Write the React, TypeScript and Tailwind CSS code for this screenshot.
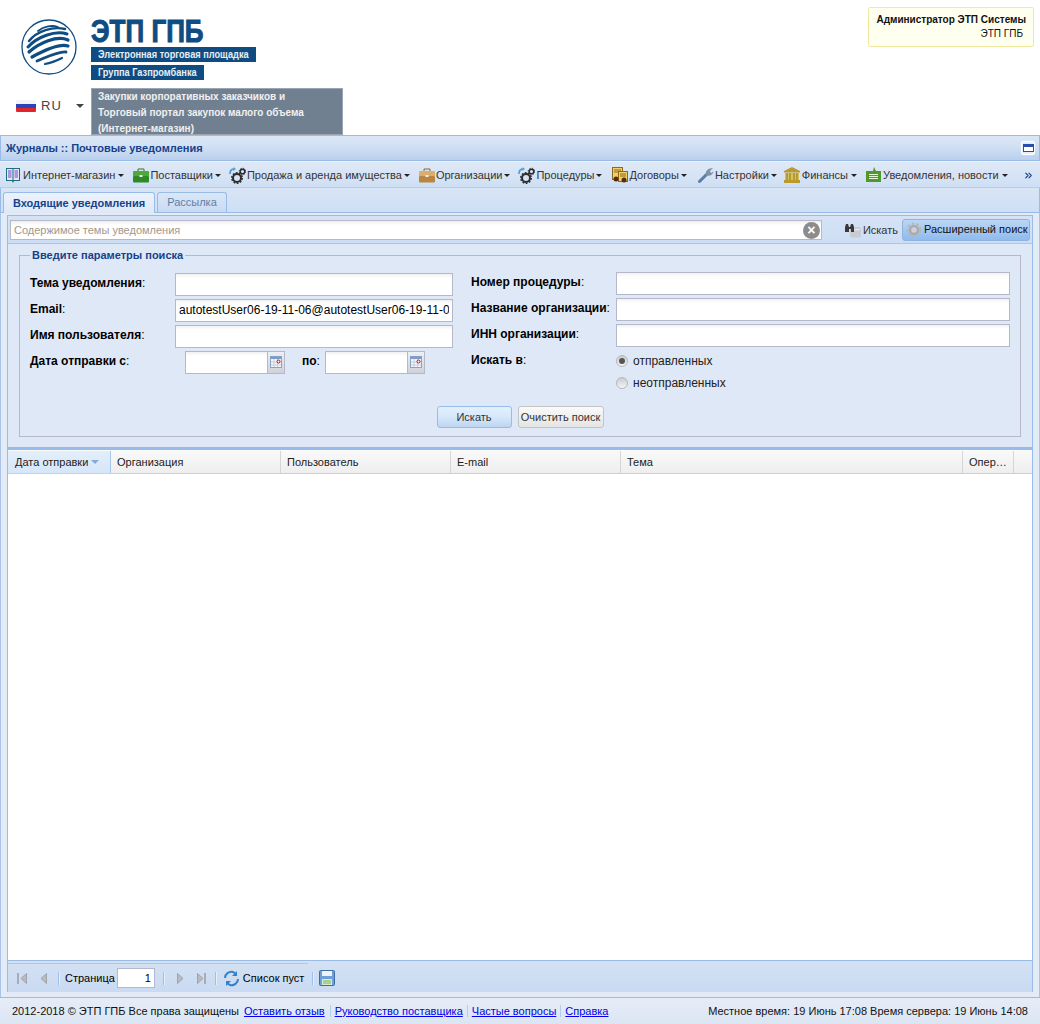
import React from 'react';
import { ChevronsRight } from 'lucide-react';

const Caret = () => (
  <span className="ml-[1px] inline-block h-0 w-0 border-x-[3px] border-t-[3px] border-x-transparent border-t-[#222]" />
);

const Gears = () => (
  <svg width="17" height="17" viewBox="0 0 17 17" fill="none">
    <path d="M1 7 C1 3.500 2.500 2 5 2" stroke="#5aa0d8" strokeWidth="1.800" />
    <path d="M4.500 0 L7 2 L4.500 4 Z" fill="#5aa0d8" />
    <circle cx="8" cy="11" r="4" stroke="#2b2b2b" strokeWidth="2" />
    <circle cx="8" cy="11" r="5.300" stroke="#2b2b2b" strokeWidth="1.400" strokeDasharray="1.800 1.500" />
    <circle cx="13.500" cy="4.500" r="2.300" stroke="#2b2b2b" strokeWidth="1.500" />
    <circle cx="13.500" cy="4.500" r="3.300" stroke="#2b2b2b" strokeWidth="1" strokeDasharray="1.300 1.300" />
  </svg>
);

const BookIcon = () => (
  <svg width="16" height="17" viewBox="0 0 16 17">
    <path d="M1 1h14v13H9l-1 2-1-2H1z" fill="#1d6f7a" />
    <rect x="2" y="2" width="5.500" height="11" fill="#e8e4fa" />
    <rect x="8.500" y="2" width="5.500" height="11" fill="#e8e4fa" />
    <path d="M3 4h3.500M3 6h3.500M3 8h3.500M3 10h3.500M9.500 4H13M9.500 6H13M9.500 8H13M9.500 10H13" stroke="#6a4bc8" />
  </svg>
);

const Case = ({ top, bottom, line }: { top: string; bottom: string; line: string }) => (
  <svg width="16" height="15" viewBox="0 0 16 15">
    <path d="M5 3V1h6v2" fill="none" stroke={line} />
    <rect y="3" width="16" height="5.500" rx="1" fill={top} />
    <rect y="8" width="16" height="6.500" rx="1" fill={bottom} />
    <rect x="6.500" y="7" width="3" height="2" fill="#eee" />
  </svg>
);

const Contracts = () => (
  <svg width="16" height="16" viewBox="0 0 16 16">
    <rect x="0.500" y="0.500" width="10" height="12" fill="#f2cf6a" stroke="#8a6a18" />
    <rect x="6.500" y="4.500" width="9" height="10" fill="#f2cf6a" stroke="#8a6a18" />
    <path d="M2 3h7M2 5h4M8 7h6M8 9h6" stroke="#8a6a18" />
    <circle cx="4" cy="12" r="2.500" fill="#5a2a12" />
    <circle cx="12" cy="13" r="2.500" fill="#5a2a12" />
  </svg>
);

const Wrench = () => (
  <svg width="16" height="16" viewBox="0 0 16 16">
    <path d="M1.500 14.500 L9 7" stroke="#5b7fa6" strokeWidth="3" strokeLinecap="round" />
    <path d="M8 8 C7 4 10 1 15 1 L12 4 L13 6 L15.500 4.500 C15 8 11 10 8 8Z" fill="#7d93aa" />
  </svg>
);

const Bank = () => (
  <svg width="16" height="16" viewBox="0 0 16 16">
    <path d="M8 0 L16 4 V5.500 H0 V4Z" fill="#b99a2a" />
    <rect x="1" y="6" width="14" height="7" fill="#dcc255" />
    <path d="M3 6v7M6 6v7M10 6v7M13 6v7" stroke="#8d7420" />
    <rect y="13" width="16" height="3" fill="#b99a2a" />
  </svg>
);

const NoteIcon = () => (
  <svg width="15" height="16" viewBox="0 0 15 16">
    <path d="M0 4 L7 4 L8 0 L10 4 H15 V15 H0Z" fill="#4f9a2c" />
    <path d="M3 7.500h9M3 9.500h9M3 11.500h9" stroke="#e8f5d8" />
  </svg>
);

const menuItems: { icon: React.ReactNode; label: string; gap: string; mr: string }[] = [
  { icon: <BookIcon />, label: 'Интернет-магазин', gap: 'gap-[2px]', mr: 'mr-[9px]' },
  { icon: <Case top="#4ea83a" bottom="#2f8a24" line="#2f7a22" />, label: 'Поставщики', gap: 'gap-[1px]', mr: 'mr-[8px]' },
  { icon: <Gears />, label: 'Продажа и аренда имущества', gap: 'gap-[1px]', mr: 'mr-[9px]' },
  { icon: <Case top="#dcae6a" bottom="#b9853f" line="#8b6430" />, label: 'Организации', gap: 'gap-[1px]', mr: 'mr-[8px]' },
  { icon: <Gears />, label: 'Процедуры', gap: 'gap-[1px]', mr: 'mr-[10px]' },
  { icon: <Contracts />, label: 'Договоры', gap: 'gap-[1px]', mr: 'mr-[11px]' },
  { icon: <Wrench />, label: 'Настройки', gap: 'gap-[1px]', mr: 'mr-[7px]' },
  { icon: <Bank />, label: 'Финансы', gap: 'gap-[2px]', mr: 'mr-[9px]' },
  { icon: <NoteIcon />, label: 'Уведомления, новости', gap: 'gap-[2px]', mr: 'mr-0' },
];

const Logo = () => (
  <svg width="60" height="58" viewBox="0 0 60 58" fill="none">
    <circle cx="30" cy="29" r="27" stroke="#0f4c81" strokeWidth="1.300" />
    <g stroke="#0f4c81" strokeLinecap="round" transform="translate(0 -1)">
      <path d="M10 24 C18 14 34 9 46 12" strokeWidth="2.400" />
      <path d="M9 30 C18 20 36 13 48 17" strokeWidth="3" />
      <path d="M10 35 C20 26 38 18 49 23" strokeWidth="3.200" />
      <path d="M13 40 C24 34 40 26 49 29" strokeWidth="3.200" />
      <path d="M18 44 C28 40 40 34 47 35" strokeWidth="2.800" />
      <path d="M26 47 C32 46 39 43 43 41" strokeWidth="2.200" />
      <path d="M19 14 C25 9 33 8 39 10" strokeWidth="1.800" />
    </g>
  </svg>
);

const Field = ({ width, value = '' }: { width: string; value?: string }) => (
  <input
    readOnly
    value={value}
    className={`${width} h-[23px] border border-[#b5b8c8] bg-white bg-gradient-to-b from-[#f1f1f1] to-white to-[4px] px-[3px] text-[12px] text-black outline-none`}
  />
);

const DateField = () => (
  <div className="flex h-[23px] w-[100px] border border-[#b5b8c8] bg-white">
    <div className="flex-1 bg-gradient-to-b from-[#f1f1f1] to-white to-[4px]" />
    <div className="flex w-[17px] items-center justify-center border-l border-[#b5b8c8] bg-gradient-to-b from-[#eceff4] to-[#cfd2d8]">
      <svg width="12" height="12" viewBox="0 0 12 12">
        <rect x="0.500" y="0.500" width="11" height="11" fill="#f4f6fa" stroke="#8ea3c4" />
        <rect x="0.500" y="0.500" width="11" height="2.500" fill="#7e9cc9" />
        <path d="M4 3v8M7.500 3v8M1 6h10M1 9h10" stroke="#c5cfde" />
        <circle cx="8.500" cy="5.500" r="1.500" fill="#fff" stroke="#a0141e" />
      </svg>
    </div>
  </div>
);

const Label = ({ text, width }: { text: string; width: string }) => (
  <div className={`${width} shrink-0 pb-[2px] text-[12px] text-black`}>
    <span className="font-bold">{text}</span>:
  </div>
);

const Radio = ({ checked, label }: { checked?: boolean; label: string }) => (
  <div className="flex h-[22px] items-center gap-[5px] text-[12px] text-[#222]">
    <span className="flex h-[12px] w-[12px] items-center justify-center rounded-full border border-[#b4b8bf] bg-gradient-to-b from-[#c9ccd1] to-[#f5f5f5]">
      {checked && <span className="h-[6px] w-[6px] rounded-full bg-[#555]" />}
    </span>
    {label}
  </div>
);

const Sep = ({ className }: { className: string }) => (
  <span className={`${className} h-[13px] w-px bg-[#9cc0ee] shadow-[1px_0_0_#e6eef9]`} />
);

const NavIcon = ({ dir, end, className = '' }: { dir: 'l' | 'r'; end?: boolean; className?: string }) => (
  <svg width="12" height="13" viewBox="0 0 12 13" className={className}>
    {dir === 'l' ? (
      <>
        {end && <rect x="1" y="1" width="2" height="11" fill="#a9adb3" />}
        <path d={end ? 'M10.500 1.500v10L5 6.500z' : 'M8.500 1.500v10L3 6.500z'} fill="#b8bcc1" stroke="#a0a4aa" />
      </>
    ) : (
      <>
        <path d="M2.500 1.500v10L8 6.500z" fill="#b8bcc1" stroke="#a0a4aa" />
        {end && <rect x="9" y="1" width="2" height="11" fill="#a9adb3" />}
      </>
    )}
  </svg>
);

const columns = [
  { title: 'Организация', w: 'w-[170px]' },
  { title: 'Пользователь', w: 'w-[170px]' },
  { title: 'E-mail', w: 'w-[170px]' },
  { title: 'Тема', w: 'w-[342px]' },
  { title: 'Опер…', w: 'w-[51px]' },
];

export default function App() {
  return (
    <div className="flex h-[1024px] w-[1040px] flex-col overflow-hidden bg-white font-['Liberation_Sans',Arial,sans-serif] text-[11px]">
      {/* шапка */}
      <div className="flex h-[135px] shrink-0 justify-between">
        <div className="pt-[18px]">
          <div className="flex">
            <div className="ml-[19px] mr-[13px] h-[62px] w-[59px]">
              <Logo />
            </div>
            <div className="flex flex-col items-start">
              <div className="h-[27px] origin-left scale-x-[0.84] text-[31px] leading-[27px] font-bold whitespace-nowrap text-[#0f4c81] [-webkit-text-stroke:1px_#0f4c81]">
                ЭТП ГПБ
              </div>
              <div className="mt-[2px] flex h-[15px] w-[165px] items-center bg-[#0f4c81] pl-[7px] text-[10px] font-bold whitespace-nowrap text-[#e8eef5]">
                <span className="inline-block origin-left scale-x-[0.92]">Электронная торговая площадка</span>
              </div>
              <div className="mt-[3px] flex h-[15px] w-[113px] items-center bg-[#0f4c81] pl-[7px] text-[10px] font-bold whitespace-nowrap text-[#e8eef5]">
                <span className="inline-block origin-left scale-x-[0.92]">Группа Газпромбанка</span>
              </div>
            </div>
          </div>
          <div className="mt-[8px] flex items-start">
            <div className="mt-[8px] ml-[16px] flex w-[75px] items-center">
              <div className="h-[12px] w-[20px] overflow-hidden rounded-[1px]">
                <div className="h-[4px] bg-[#f4f4f4]" />
                <div className="h-[4px] bg-[#2a45b8]" />
                <div className="h-[4px] bg-[#e0262c]" />
              </div>
              <span className="ml-[5px] text-[13px] tracking-[1px] text-[#444]">RU</span>
              <span className="ml-[14px] h-0 w-0 border-x-[4px] border-t-[4px] border-x-transparent border-t-[#444]" />
            </div>
            <div className="h-[47px] w-[252px] overflow-hidden border border-[#9aa5b1] bg-[#708090] pl-[6px] text-[10px] leading-[16px] font-bold text-[#f0f0f0]">
              <div>Закупки корпоративных заказчиков и</div>
              <div>Торговый портал закупок малого объема</div>
              <div>(Интернет-магазин)</div>
            </div>
          </div>
        </div>
        <div className="mt-[7px] mr-[6px] flex h-[40px] w-[166px] flex-col rounded-[2px] border border-[#f0e9a0] bg-[#fffff0] pt-[5px] pr-[7px] text-right text-[10px] leading-[14px] text-[#111]">
          <div className="font-bold">Администратор ЭТП Системы</div>
          <div className="pr-[3px]">ЭТП ГПБ</div>
        </div>
      </div>

      {/* заголовок панели */}
      <div className="flex h-[26px] shrink-0 items-center justify-between border border-[#99bbe8] bg-gradient-to-b from-[#dbe7f6] via-[#cfdff3] via-50% to-[#b9cfee] pr-[4px] pl-[5px] font-bold text-[#15428b]">
        <span>Журналы :: Почтовые уведомления</span>
        <span className="flex h-[14px] w-[14px] items-center justify-center rounded-[2px] border border-white bg-[#e6eef9]">
          <span className="h-[8px] w-[11px] border border-t-[3px] border-[#2a4fa8] bg-white" />
        </span>
      </div>

      {/* меню */}
      <div className="flex h-[27px] shrink-0 items-center border-y border-t-[#eef4fb] border-b-[#b5cdec] bg-gradient-to-b from-[#dfe9f7] to-[#cfdff4] pt-[1px] pl-[5px] text-[#333]">
        {menuItems.map((m, i) => (
          <div key={i} className={`flex items-center ${m.gap} ${m.mr} whitespace-nowrap`}>
            {m.icon}
            <span>{m.label}</span>
            <Caret />
          </div>
        ))}
        <ChevronsRight size={11} strokeWidth={2.500} className="mr-[6px] ml-auto text-[#15428b]" />
      </div>

      {/* вкладки */}
      <div className="flex h-[25px] shrink-0 items-end gap-[2px] border-x border-b border-[#99bbe8] bg-gradient-to-b from-[#d9e5f5] to-[#cedff5] pl-[2px]">
        <div className="-mb-px flex h-[21px] w-[152px] items-center justify-center rounded-t-[3px] border border-b-0 border-[#99bbe8] bg-gradient-to-b from-[#e9f2fd] to-[#dfe8f6] font-bold text-[#15428b]">
          Входящие уведомления
        </div>
        <div className="flex h-[20px] w-[70px] items-center justify-center rounded-t-[3px] border border-b-0 border-[#99bbe8] bg-gradient-to-b from-[#dbe7f7] to-[#c8daf3] text-[#5f7ea6]">
          Рассылка
        </div>
      </div>

      {/* содержимое */}
      <div className="flex min-h-0 flex-1 flex-col border-x border-[#a9c4e8] bg-[#e3ebf7] px-[6px] pt-[2px] pb-[5px]">
        <div className="flex min-h-0 flex-1 flex-col border-x border-t border-[#99bbe8]">
          <div className="flex h-[28px] shrink-0 items-center border-b border-[#a9c6ec] bg-gradient-to-b from-[#d6e3f5] to-[#cddef4] pr-[2px] pl-[2px]">
            <div className="relative flex h-[20px] w-[812px] items-center border border-[#b5b8c8] bg-white bg-gradient-to-b from-[#eeeeee] to-white to-[4px] pt-[2px] pl-[3px] text-[11px] text-[#a3978c]">
              Содержимое темы уведомления
              <span className="absolute top-[1px] right-[1px] flex h-[17px] w-[17px] items-center justify-center rounded-full bg-[#8c8c8c] text-[14px] leading-none font-bold text-white">
                ×
              </span>
            </div>
            <div className="ml-[22px] flex items-center pt-[1px] text-[#333]">
              <svg width="18" height="15" viewBox="0 0 18 15" className="mr-[1px]">
                <rect x="6" y="4" width="11" height="10.500" rx="2" fill="#c9ccd1" />
                <path d="M7 6c2 1.200 7 1.200 9 0" stroke="#f2f3f5" fill="none" />
                <path d="M1 9V4l1-3h2l1 3h1l1-3h2l1 3v5H7V6H5v3z" fill="#3a3a3a" />
              </svg>
              Искать
            </div>
            <div className="ml-[4px] flex h-[22px] w-[128px] items-center gap-[1px] rounded-[3px] border border-[#8fb2de] bg-gradient-to-b from-[#bcd6f3] to-[#8fbbef] pl-[2px] text-[#111]">
              <svg width="18" height="18" viewBox="0 0 18 18" fill="none">
                <circle cx="9" cy="9" r="4" fill="#d0d3d6" stroke="#a8acb0" strokeWidth="2.500" />
                <circle cx="9" cy="9" r="6.500" stroke="#b4b8bc" strokeWidth="2" strokeDasharray="2.600 2" />
              </svg>
              Расширенный поиск
            </div>
          </div>

          {/* параметры поиска */}
          <div className="h-[206px] shrink-0 border-b-[3px] border-[#99bbe8] bg-[#dfe8f6] pt-[5px] pr-[11px] pl-[11px]">
            <fieldset className="h-[188px] border border-[#b5b8c8] px-[10px]">
              <legend className="px-[2px] leading-[13px] font-bold text-[#15428b]">Введите параметры поиска</legend>
              <div className="flex">
                <div className="w-[441px] shrink-0 pt-[9px]">
                  <div className="flex h-[26px] items-center">
                    <Label text="Тема уведомления" width="w-[145px]" />
                    <Field width="w-[278px]" />
                  </div>
                  <div className="flex h-[26px] items-center">
                    <Label text="Email" width="w-[145px]" />
                    <Field width="w-[278px]" value="autotestUser06-19-11-06@autotestUser06-19-11-06.ru" />
                  </div>
                  <div className="flex h-[26px] items-center">
                    <Label text="Имя пользователя" width="w-[145px]" />
                    <Field width="w-[278px]" />
                  </div>
                  <div className="flex h-[26px] items-center">
                    <Label text="Дата отправки с" width="w-[155px]" />
                    <DateField />
                    <div className="ml-[17px] w-[23px] pb-[2px] text-[12px] text-black">
                      <span className="font-bold">по</span>:
                    </div>
                    <DateField />
                  </div>
                </div>
                <div className="pt-[8px]">
                  <div className="flex h-[26px] items-center">
                    <Label text="Номер процедуры" width="w-[145px]" />
                    <Field width="w-[394px]" />
                  </div>
                  <div className="flex h-[26px] items-center">
                    <Label text="Название организации" width="w-[145px]" />
                    <Field width="w-[394px]" />
                  </div>
                  <div className="flex h-[26px] items-center">
                    <Label text="ИНН организации" width="w-[145px]" />
                    <Field width="w-[394px]" />
                  </div>
                  <div className="flex pt-[3px]">
                    <Label text="Искать в" width="w-[145px]" />
                    <div className="-mt-[1px]">
                      <Radio checked label="отправленных" />
                      <Radio label="неотправленных" />
                    </div>
                  </div>
                </div>
              </div>
              <div className="mt-[12px] flex justify-center gap-[6px]">
                <div className="flex h-[22px] w-[75px] items-center justify-center rounded-[3px] border border-[#99bbe8] bg-gradient-to-b from-[#e3f0fd] via-[#d6e8fb] to-[#bdd4f0] text-[#333]">
                  Искать
                </div>
                <div className="flex h-[22px] w-[86px] items-center justify-center rounded-[3px] border border-[#c4c4c4] bg-gradient-to-b from-[#fafafa] to-[#e4e4e4] text-[#333]">
                  Очистить поиск
                </div>
              </div>
            </fieldset>
          </div>

          {/* таблица */}
          <div className="flex h-[24px] shrink-0 border-b border-[#d0d0d0] bg-gradient-to-b from-[#fafafa] to-[#eeeeee] pt-px text-[#222]">
            <div className="flex w-[103px] items-center gap-[3px] border-r border-[#a9c6ec] bg-gradient-to-b from-[#e3eefb] to-[#d6e6f9] pl-[7px]">
              Дата отправки
              <span className="h-0 w-0 border-x-[4px] border-t-[4px] border-x-transparent border-t-[#84a9d6]" />
            </div>
            {columns.map((c) => (
              <div key={c.title} className={`${c.w} flex items-center border-r border-[#d5d5d5] pl-[6px]`}>
                {c.title}
              </div>
            ))}
          </div>
          <div className="min-h-0 flex-1 border-b border-[#99bbe8] bg-white" />

          {/* постраничка */}
          <div className="flex h-[31px] shrink-0 flex-col bg-gradient-to-b from-[#d4e1f3] to-[#c9daf2] text-black">
            <div className="mt-[2px] h-px w-[300px] bg-[#a9c6ec]" />
            <div className="flex flex-1 items-center pl-[8px]">
              <NavIcon dir="l" end />
              <NavIcon dir="l" className="ml-[10px]" />
              <Sep className="mr-[6px] ml-[8px]" />
              <span>Страница</span>
              <input
                readOnly
                value="1"
                className="ml-[2px] h-[20px] w-[38px] border border-[#b5b8c8] bg-white pr-[3px] text-right text-[11px] outline-none"
              />
              <Sep className="mr-[11px] ml-[8px]" />
              <NavIcon dir="r" />
              <NavIcon dir="r" end className="ml-[8px]" />
              <Sep className="mr-[7px] ml-[8px]" />
              <svg width="17" height="17" viewBox="0 0 17 17" fill="none">
                <path d="M2 8 C2 4 6 1 10 2 L13 4" stroke="#2f82cf" strokeWidth="2" />
                <path d="M14 1v5H9z" fill="#2f82cf" />
                <path d="M15 9 C15 13 11 16 7 15 L4 13" stroke="#2f82cf" strokeWidth="2" />
                <path d="M3 16v-5h5z" fill="#2f82cf" />
              </svg>
              <span className="ml-[3px]">Список пуст</span>
              <Sep className="mr-[6px] ml-[8px]" />
              <svg width="16" height="16" viewBox="0 0 16 16">
                <rect x="0.500" y="0.500" width="15" height="15" rx="1" fill="#6f9fd8" stroke="#3d6ea8" />
                <rect x="3" y="1" width="10" height="5" fill="#eef3fa" />
                <rect x="3" y="9" width="10" height="6" fill="#d8ecc8" />
                <path d="M4 11h8M4 13h8" stroke="#7fb060" />
              </svg>
            </div>
          </div>
        </div>
      </div>

      {/* подвал */}
      <div className="flex h-[27px] shrink-0 items-center justify-between border-t border-[#99bbe8] bg-gradient-to-b from-[#e6edf7] to-[#dbe5f3] pr-[12px] pl-[12px] text-[#111]">
        <div className="flex items-center">
          <span className="mr-[5px]">2012-2018 © ЭТП ГПБ Все права защищены</span>
          <a className="text-[#0000ee] underline">Оставить отзыв</a>
          <span className="mr-[4px] ml-[5px] h-[12px] w-px bg-[#b5cdec]" />
          <a className="text-[#0000ee] underline">Руководство поставщика</a>
          <span className="mx-[4px] h-[12px] w-px bg-[#b5cdec]" />
          <a className="text-[#0000ee] underline">Частые вопросы</a>
          <span className="mx-[4px] h-[12px] w-px bg-[#b5cdec]" />
          <a className="text-[#0000ee] underline">Справка</a>
        </div>
        <span>Местное время: 19 Июнь 17:08 Время сервера: 19 Июнь 14:08</span>
      </div>
    </div>
  );
}
